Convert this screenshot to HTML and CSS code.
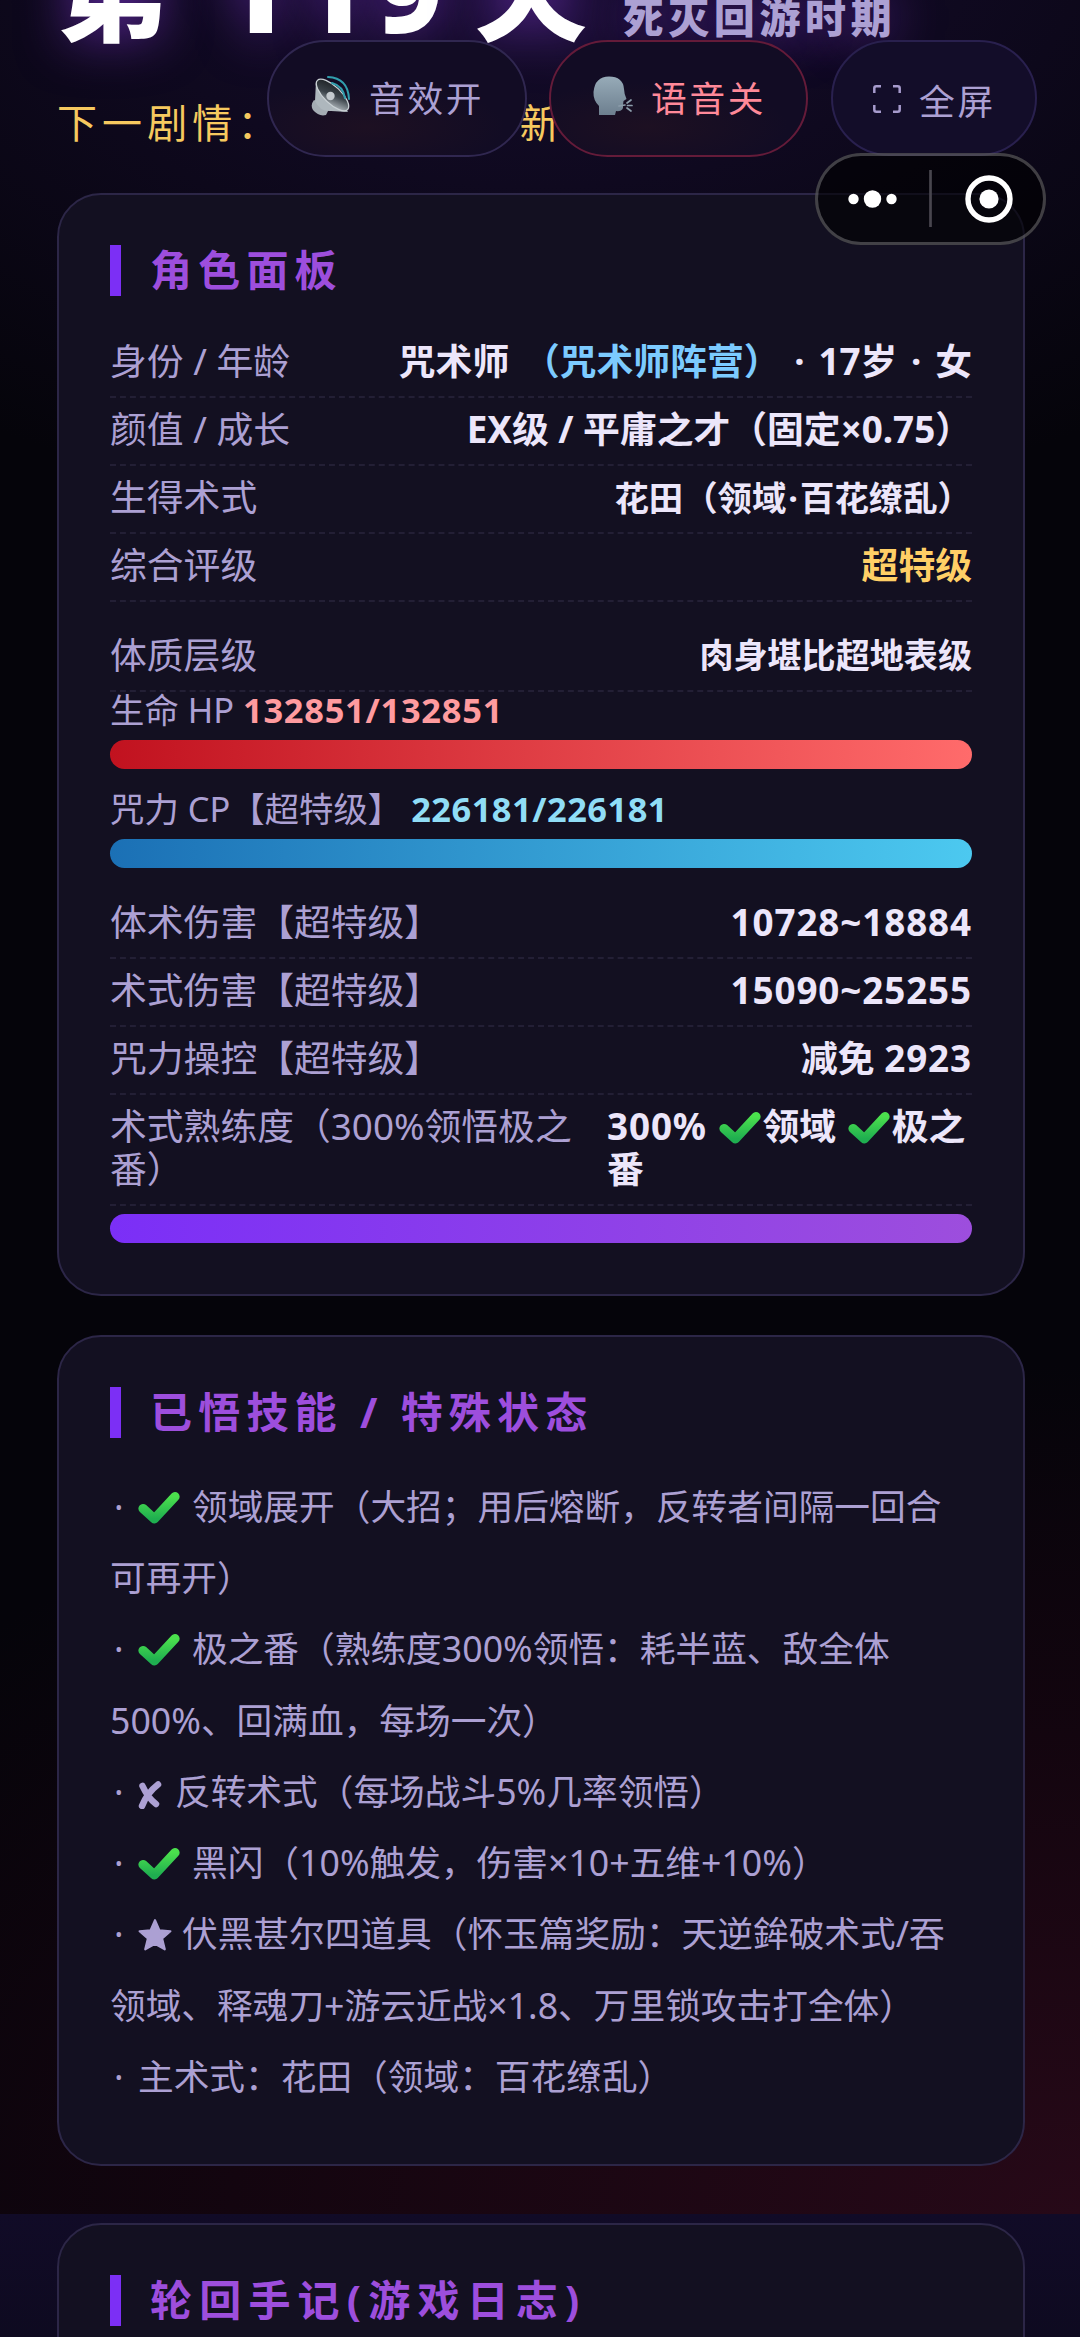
FILE: index.html
```html
<!DOCTYPE html>
<html lang="zh-CN">
<head>
<meta charset="utf-8">
<title>角色面板</title>
<link rel="stylesheet" href="styles.css">
</head>
<body>
<svg class="defs" aria-hidden="true">
  <defs>
    <linearGradient id="green" x1="0" y1="0" x2="0" y2="1"><stop offset="0" stop-color="#4be04d"/><stop offset="1" stop-color="#1fae50"/></linearGradient>
    <linearGradient id="head" x1="0" y1="0" x2="0" y2="1"><stop offset="0" stop-color="#97abb8"/><stop offset="1" stop-color="#6d7f8f"/></linearGradient>
    <linearGradient id="cone" x1="0" y1="0" x2="1" y2="1"><stop offset="0" stop-color="#15181b"/><stop offset=".5" stop-color="#3c444b"/><stop offset="1" stop-color="#cfd6db"/></linearGradient>
    <symbol id="tick" viewBox="0 0 40 32"><path d="M4.500 17 L15.500 27 L35.500 5.500" fill="none" stroke="url(#green)" stroke-width="9" stroke-linejoin="round" stroke-linecap="round"/></symbol>
  </defs>
</svg>
<div class="screen">
  <header class="hero">
    <h1 class="day"><span class="day-cjk">第</span><span class="day-num">119</span><span class="day-cjk">天</span><span class="era">死灭回游时期</span></h1>
    <p class="next"><span>下一剧情：</span><span>新</span></p>
  </header>

  <main class="cards">
    <section class="card">
      <h2 class="title">角色面板</h2>
      <div class="row"><span class="key">身份 / 年龄</span><b class="val wide">咒术师 <span class="blue">（咒术师阵营）</span> · 17岁 · 女</b></div>
      <div class="row"><span class="key">颜值 / 成长</span><b class="val">EX级 / 平庸之才（固定×0.75）</b></div>
      <div class="row"><span class="key">生得术式</span><b class="val small">花田（领域<span class="dot">·</span>百花缭乱）</b></div>
      <div class="row"><span class="key">综合评级</span><b class="val gold">超特级</b></div>
      <div class="row spaced"><span class="key">体质层级</span><b class="val small body">肉身堪比超地表级</b></div>
      <div class="meter-label">生命 HP <b class="hp">132851/132851</b></div>
      <div class="meter meter-hp"></div>
      <div class="meter-label second">咒力 CP【超特级】 <b class="cp">226181/226181</b></div>
      <div class="meter meter-cp"></div>
      <div class="row spaced"><span class="key">体术伤害【超特级】</span><b class="val num">10728~18884</b></div>
      <div class="row"><span class="key">术式伤害【超特级】</span><b class="val num">15090~25255</b></div>
      <div class="row"><span class="key">咒力操控【超特级】</span><b class="val">减免 <span class="num">2923</span></b></div>
      <div class="row split"><span class="key">术式熟练度（300%领悟极之<br>番）</span><b class="val"><span class="num">300%</span> <svg class="tick-b"><use href="#tick"/></svg>领域 <svg class="tick-b"><use href="#tick"/></svg>极之<br>番</b></div>
      <div class="meter meter-skill"></div>
    </section>

    <section class="card skills">
      <h2 class="title">已悟技能 / 特殊状态</h2>
      <ul class="list">
        <li><i>·</i><svg class="tick"><use href="#tick"/></svg>领域展开（大招；用后熔断，反转者间隔一回合<br>可再开）</li>
        <li><i>·</i><svg class="tick"><use href="#tick"/></svg>极之番（熟练度300%领悟：耗半蓝、敌全体<br>500%、回满血，每场一次）</li>
        <li><i>·</i><svg class="cross" viewBox="0 0 24 28"><path d="M4.500 5 Q10 17 18 23 M20 3.500 Q9 12 4 25" fill="none" stroke="#aca0d3" stroke-width="6.500" stroke-linecap="round"/></svg>反转术式（每场战斗5%几率领悟）</li>
        <li><i>·</i><svg class="tick"><use href="#tick"/></svg>黑闪（10%触发，伤害×10+五维+10%）</li>
        <li><i>·</i><svg class="star" viewBox="0 0 32 32"><path d="M16 2 L20.200 11.600 L30.500 12.500 L22.700 19.300 L25.200 29.500 L16 24.200 L6.800 29.500 L9.300 19.300 L1.500 12.500 L11.800 11.600 Z" fill="#aca0d3" stroke="#aca0d3" stroke-width="2" stroke-linejoin="round"/></svg>伏黑甚尔四道具（怀玉篇奖励：天逆鉾破术式/吞<br>领域、释魂刀+游云近战×1.8、万里锁攻击打全体）</li>
        <li><i>·</i>主术式：花田（领域：百花缭乱）</li>
      </ul>
    </section>

    <section class="card journal">
      <h2 class="title">轮回手记(游戏日志)</h2>
    </section>
  </main>

  <nav class="tools">
    <button class="pill sound"><svg class="emoji" viewBox="0 0 40 42"><path d="M3 25 Q-1 30 2 35 Q8 42 15 40 L19 32 Z" fill="#a5adb4"/><path d="M5 6 L4 26 Q9 37 20 36 L37 37 Q24 15 5 6Z" fill="#aeb7bd"/><ellipse cx="21.500" cy="20" rx="21" ry="8.500" transform="rotate(44 21.500 20)" fill="url(#cone)" stroke="#cbd2d6" stroke-width="1.300"/><circle cx="19.500" cy="21" r="4.200" fill="#c3c9ce"/><path d="M17 2 Q37 3 38 24 M21 8 Q32 11 34 23" fill="none" stroke="#319ead" stroke-width="2" stroke-linecap="round"/></svg>音效开</button>
    <button class="pill voice"><svg class="emoji" viewBox="0 0 40 42"><path d="M6 40 V31 Q0 25 0.500 17 Q2 1.500 16 1.500 Q30 1.500 31 14 Q31 18 33.500 24 L30.500 26 L30 30 Q31 37 23 36 L22 40Z" fill="url(#head)"/><path d="M26 31 L32 30 M34 28 L38 25 M34.500 30.500 H39 M34 33 L38 36" stroke="#8c9dab" stroke-width="1.700" fill="none" stroke-linecap="round"/></svg>语音关</button>
    <button class="pill full"><svg class="corners" viewBox="0 0 28 28"><path d="M1.300 8 V3.300 Q1.300 1.300 3.300 1.300 H8 M20 1.300 H24.700 Q26.700 1.300 26.700 3.300 V8 M26.700 20 V24.700 Q26.700 26.700 24.700 26.700 H20 M8 26.700 H3.300 Q1.300 26.700 1.300 24.700 V20" fill="none" stroke="#a79bcd" stroke-width="2.500"/></svg>全屏</button>
  </nav>
  <div class="capsule">
    <svg viewBox="0 0 230 92"><g fill="#fff"><circle cx="38" cy="46" r="5.200"/><circle cx="57" cy="46" r="8.700"/><circle cx="76" cy="46" r="5.200"/><circle cx="173.500" cy="46" r="9.600"/></g><path d="M115 17 V74" stroke="#48464e" stroke-width="2.700"/><circle cx="173.500" cy="46" r="21" fill="none" stroke="#fff" stroke-width="5.400"/></svg>
  </div>
</div>
</body>
</html>
```
FILE: styles.css
```css
* { box-sizing: border-box; }

body {
  margin: 0;
  background: #05040a;
  color: #aca0d3;
  font-family: "Noto Sans", "Noto Sans CJK SC", sans-serif;
}

.defs { position: absolute; width: 0; height: 0; }

.screen {
  position: relative;
  width: 1080px;
  height: 2337px;
  overflow: hidden;
  padding: 0 55px 0 57px;
  background:
    linear-gradient(#110b27, #0e0a20) 0 2214px / 100% 123px no-repeat,
    radial-gradient(ellipse 1500px 850px at 100% 2214px, #270918, rgba(22, 5, 16, 0.75) 60%, transparent 100%),
    radial-gradient(ellipse 1000px 620px at 50% -90px, #170d30, transparent 100%),
    #05040a;
}

.hero { display: flow-root; height: 193px; white-space: nowrap; }

.day {
  display: flex;
  align-items: baseline;
  height: 168px;
  margin: -95px 0 0;
  line-height: 168px;
  color: #fff;
  font-weight: 900;
  font-size: 112px;
  text-shadow: 0 0 50px rgba(140, 60, 230, 0.6);
}
.day-num { margin: 0 20px 0 51px; font-size: 113px; letter-spacing: 12px; }
.era { margin-left: 36px; color: #aca0d3; font-size: 41px; letter-spacing: 4.600px; }

.next {
  display: flex;
  gap: 237px;
  margin: 20px 0 0;
  line-height: 60px;
  font-size: 40px;
  letter-spacing: 5.100px;
  color: #f6c95f;
}

.card {
  padding: 50px 51px 51px 51px;
  border: 2px solid #2c2647;
  border-radius: 44px;
  background: #131021;
}
.cards { display: flex; flex-direction: column; }
.skills { margin-top: 39px; }
.journal { margin-top: 57px; height: 300px; }

.title {
  margin: 0 0 34px;
  padding-left: 29px;
  border-left: 11px solid #7c2ff5;
  height: 51px;
  line-height: 49px;
  font-size: 42px;
  font-weight: 700;
  letter-spacing: 6.200px;
  color: #9d4edd;
  white-space: nowrap;
}
.skills .title { margin-bottom: 33px; }
.journal .title { letter-spacing: 7.200px; }

.row {
  display: flex;
  justify-content: space-between;
  padding: 10.100px 0 13px;
  border-bottom: 2px dashed #231f35;
  line-height: 43px;
  font-size: 36.800px;
  white-space: nowrap;
}
.row.spaced { margin-top: 22px; }
.split .val { width: 365px; }
.val { color: #ece6fa; font-weight: 700; }
.wide { word-spacing: 4.200px; }
.small { font-size: 34.400px; }
.body { font-size: 34.100px; }
.dot { margin: 0 2px; }
.num { letter-spacing: 0.900px; }
.gold { color: #ffcf66; }
.blue { color: #7ccbff; }

.meter-label { font-size: 34.400px; line-height: 35px; white-space: nowrap; }
.second { margin-top: 22px; }
.hp { color: #ff9b9f; letter-spacing: 0.750px; }
.cp { color: #90ddf6; letter-spacing: 0.500px; }
.meter { height: 29px; margin-top: 13px; border-radius: 15px; }
.meter-hp { background: linear-gradient(90deg, #c1121f, #ff6b6b); }
.meter-cp { background: linear-gradient(90deg, #1b70b5, #4cc9f0); }
.meter-skill { margin-top: 8px; background: linear-gradient(90deg, #7b2ff7, #9d4edd); }

.tick-b { width: 42px; height: 33px; margin: 0 2px; vertical-align: -4px; }

.list {
  margin: 0 0 1px;
  padding: 0;
  list-style: none;
  font-size: 35.700px;
  line-height: 71.250px;
  white-space: nowrap;
}
.list i { display: inline-block; width: 28px; padding-left: 4px; font-style: normal; }
.tick { width: 42px; height: 33px; margin-right: 12px; vertical-align: -4px; }
.cross { width: 24px; height: 28px; margin-right: 13px; vertical-align: -4px; }
.star { width: 34px; height: 34px; margin-right: 10px; vertical-align: -5px; }

.tools { position: absolute; left: 267px; top: 40px; display: flex; }
.pill {
  display: flex;
  align-items: center;
  gap: 18px;
  width: 260px;
  height: 117px;
  padding: 0 0 5px 42px;
  border: 2px solid #302750;
  border-radius: 59px;
  background: radial-gradient(ellipse 140px 45px at 38% 75%, #1d1022, transparent), #120c24;
  color: #aca0d3;
  font: 35.700px "Noto Sans", "Noto Sans CJK SC", sans-serif;
  letter-spacing: 2.750px;
  white-space: nowrap;
}
.voice { margin-left: 22px; width: 259px; border-color: #641b39; color: #ff8999; }
.full { margin-left: 23px; width: 206px; height: 116px; padding: 2px 0 0 40px; border-color: #29204e; background: #130d29; }
.emoji { width: 40px; height: 42px; flex: none; }
.corners { width: 28px; height: 28px; flex: none; }

.capsule {
  position: absolute;
  left: 815px;
  top: 153px;
  width: 231px;
  height: 92px;
  border-radius: 46px;
  box-shadow: inset 0 0 0 3px rgba(255, 255, 255, 0.24);
  background: rgba(0, 0, 0, 0.6);
}
.capsule svg { display: block; width: 231px; height: 92px; }
```
